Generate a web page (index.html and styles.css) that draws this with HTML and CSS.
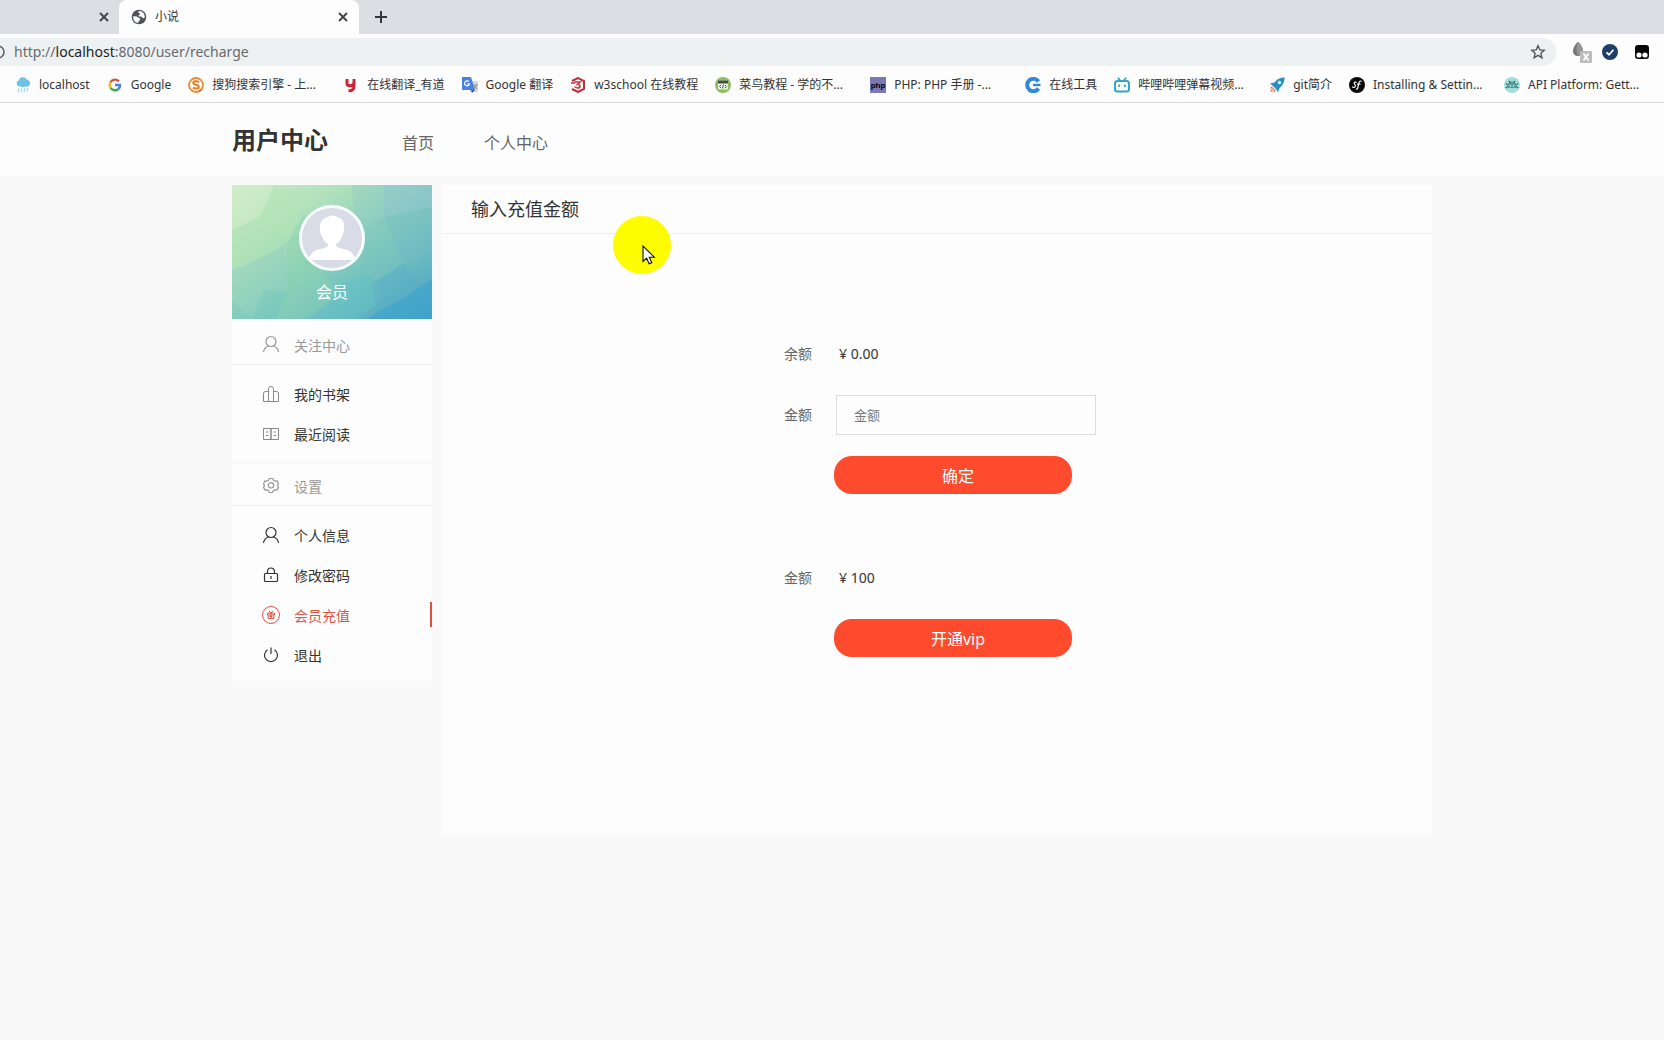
FILE: index.html
```html
<!DOCTYPE html>
<html lang="zh-CN">
<head>
<meta charset="utf-8">
<meta name="viewport" content="width=device-width, initial-scale=1">
<title>小说</title>
<link rel="stylesheet" href="styles.css">
</head>
<body>
<div class="browser">
  <div class="tabs">
    <div class="tab tab-rest">
      <button class="tab-close" aria-label="关闭"><svg width="10" height="10" viewBox="0 0 10 10"><path d="M1 1l8 8M9 1l-8 8" stroke="#3f4347" stroke-width="1.8"/></svg></button>
    </div>
    <div class="tab tab-active">
      <svg width="16" height="16" viewBox="0 0 16 16"><circle cx="8" cy="8" r="7.3" fill="#505357"/><path d="M2.200 7.200c2-.2 4.200.2 5.200 1.200.8.800 2 .8 1.800 2-.2 1.200-1.800 1-2 3.400C4 13.600 1.800 11 2.200 7.200zM8 2c-1 1-.6 2.200.6 2.400 1 .2.2 1.400-.8 1.800-.8.4-.2 1.400 1 1.400 1.600 0 2.600.6 3 1.600.8.200 1.400-.2 2-.8C14 4.800 11.200 1.800 8 2z" fill="#fdfdfd"/></svg>
      <span class="tab-name">小说</span>
      <button class="tab-close" aria-label="关闭"><svg width="10" height="10" viewBox="0 0 10 10"><path d="M1 1l8 8M9 1l-8 8" stroke="#3f4347" stroke-width="1.8"/></svg></button>
    </div>
    <button class="tab-new" aria-label="新标签页"><svg width="12" height="12" viewBox="0 0 12 12"><path d="M6 0v12M0 6h12" stroke="#33373b" stroke-width="2"/></svg></button>
  </div>
  <div class="toolbar">
    <div class="address">
      <svg class="site-info" width="5" height="14" viewBox="9 0 5 14"><circle cx="7" cy="7" r="6" fill="none" stroke="#606468" stroke-width="1.6"/></svg>
      <span class="url">http://<b>localhost</b>:8080/user/recharge</span>
      <svg width="16" height="16" viewBox="0 0 16 16"><path d="M8 1.800l1.800 4.100 4.400.4-3.300 3 1 4.400L8 11.400l-3.900 2.300 1-4.400-3.300-3 4.400-.4z" fill="none" stroke="#53575b" stroke-width="1.4"/></svg>
    </div>
    <div class="extensions">
      <svg width="20" height="22" viewBox="0 0 20 22"><path d="M6 1C3 3 1 7 1 10c0 3 2 5 5 5s5-2 5-5c0-3-2-7-5-9z" fill="#777"/><path d="M6 1C4 5 4 10 6 15c3 0 5-2 5-5 0-3-2-7-5-9z" fill="#959595"/><rect x="8" y="10" width="12" height="12" rx="1" fill="#bcbcbc"/><path d="M11.500 12.500l5 7M16.500 12.500l-5 7" stroke="#fff" stroke-width="1.8"/></svg>
      <svg width="16" height="16" viewBox="0 0 16 16"><circle cx="8" cy="8" r="8" fill="#1f3f69"/><path d="M4.500 8.300l2.500 2.400 4.500-4.900" fill="none" stroke="#fff" stroke-width="1.7"/></svg>
      <svg class="last" width="14" height="14" viewBox="0 0 14 14"><rect width="14" height="14" rx="3" fill="#050505"/><circle cx="4" cy="10" r="2.6" fill="#fff"/><circle cx="10" cy="10" r="2.6" fill="#fff"/></svg>
    </div>
  </div>
  <nav class="bookmarks" aria-label="书签">
    <a href="#"><svg viewBox="0 0 16 16"><path d="M4 9.500a3.200 3.200 0 0 1-.4-6A4.400 4.400 0 0 1 12 3a3.300 3.300 0 0 1 .5 6.500z" fill="#72bfe8"/><path d="M8 5v5" stroke="#72bfe8" stroke-width="3"/><path d="M4 11l-1 4M7 10.500l-1 5M10 11l-1 4M13 10.500l-1 4" stroke="#a5d7ef" stroke-width="1.2"/></svg><span>localhost</span></a>
    <a href="#"><svg viewBox="0 0 16 16"><g fill="none" stroke-width="2.4"><path d="M3.600 5.200A5 5 0 0 1 11.800 4.400" stroke="#e04a3f"/><path d="M3.600 5.200a5 5 0 0 0 0 5.500" stroke="#f2b705"/><path d="M3.600 10.700a5 5 0 0 0 7.800 1.300" stroke="#3fa757"/><path d="M8 8h5a5 5 0 0 1-1.600 4" stroke="#4a80e8"/></g></svg><span>Google</span></a>
    <a href="#"><svg viewBox="0 0 16 16"><circle cx="8" cy="8" r="7" fill="#fff" stroke="#ec8b36" stroke-width="1.8"/><path d="M11 5C9 3.800 5.200 4 5.200 6s5.600 1.600 5.600 3.700S7 12 4.800 10.700M11 14.500l3-2.500" fill="none" stroke="#e97b22" stroke-width="2.1"/></svg><span class="cut">搜狗搜索引擎 - 上...</span></a>
    <a href="#"><svg viewBox="0 0 16 16"><path d="M4 2v4.500c0 3 5.500 3 7 0V2M11 2v7c0 3.500-2 5-5.500 4.600" fill="none" stroke="#cf2436" stroke-width="3"/></svg><span>在线翻译_有道</span></a>
    <a href="#"><svg viewBox="0 0 16 16"><path d="M6 4h10v11H8z" fill="#d6d9dc"/><path d="M0 0h9l4 13H1a1 1 0 0 1-1-1z" fill="#4a82dc"/><path d="M9 13h4l-3 3z" fill="#3658b0"/><path d="M7 4.700A2.500 2.500 0 1 0 7.500 7H5.200" fill="none" stroke="#fff" stroke-width="1.2"/><path d="M11.500 8h4M12 12l3-4M12.500 9l2.500 3" stroke="#7c8790" stroke-width="1"/></svg><span>Google 翻译</span></a>
    <a href="#"><svg viewBox="0 0 16 16"><path d="M2 4l6-3 6 3v8l-6 3-6-3" fill="none" stroke="#bd303b" stroke-width="2"/><path d="M1 6h4M4.500 5H10L7.500 7.500c3-.2 3.500 3.500.5 3.500-1.500 0-3-.6-3-1.500" fill="none" stroke="#c8363f" stroke-width="1.7"/></svg><span>w3school 在线教程</span></a>
    <a href="#"><svg viewBox="0 0 16 16"><circle cx="8" cy="8" r="8" fill="#8fbd62"/><rect x="3" y="3.500" width="10" height="9" rx="1" fill="#e9f1e0"/><path d="M3 3.500h10v3H3z" fill="#3c5142"/><path d="M6 8L4.500 9.500 6 11M10 8l1.500 1.500L10 11M8.500 7.500l-1 4" fill="none" stroke="#53605a"/></svg><span class="cut">菜鸟教程 - 学的不...</span></a>
    <a href="#"><svg viewBox="0 0 16 16"><path d="M0 0h16v16H0z" fill="#7b78b3"/><text x="8" y="11" class="php-mark">php</text></svg><span class="cut">PHP: PHP 手册 -...</span></a>
    <a href="#"><svg viewBox="0 0 16 16"><path d="M13.500 4.500A6.200 6.200 0 1 0 13.500 11.500" fill="none" stroke="#3488d8" stroke-width="4"/><path d="M8 8h7.500" stroke="#3488d8" stroke-width="2.4"/></svg><span>在线工具</span></a>
    <a href="#"><svg viewBox="0 0 16 16"><rect x="1" y="4" width="14" height="10.500" rx="2.5" fill="none" stroke="#33a5c6" stroke-width="2"/><path d="M4 .8L6.500 4M12 .8L9.500 4M5.200 7.500v2.500M10.800 7.500v2.500" stroke="#33a5c6" stroke-width="1.8"/></svg><span class="cut">哔哩哔哩弹幕视频...</span></a>
    <a href="#"><svg viewBox="0 0 16 16"><path d="M15.500.5C10 .5 7.500 3 5.500 5.500L1 6.500l2.500 2 4 4 1.500 3L10.500 11C13 9 15.500 6 15.500.5z" fill="#258fc8"/><circle cx="10.500" cy="5.500" r="1.7" fill="#e4f4fa"/><path d="M3.500 9.500l-2 2M5 11l-3.500 3.500M6.500 12.500l-2 2.500" stroke="#e28458" stroke-width="1.5"/></svg><span>git简介</span></a>
    <a href="#"><svg viewBox="0 0 16 16"><circle cx="8" cy="8" r="8" fill="#090909"/><path d="M7.500 5.700C6.500 4.500 4.500 5.500 5.500 7s1.500 2.500 0 3.300c-1 .5-2 0-2-.8M12.500 4.500c-1.500-1.500-2.500.5-3 3S8.700 12.800 7 11.900M8 7.200h3.500" fill="none" stroke="#fff" stroke-width="1.2"/></svg><span class="cut">Installing &amp; Settin...</span></a>
    <a href="#"><svg viewBox="0 0 16 16"><circle cx="8" cy="8" r="8" fill="#a2dfda"/><path d="M4 11V8.500a4 4 0 0 1 8 0V11z" fill="#56a09c"/><path d="M5 4l1.500 2M11 4L9.500 6M2 6.500L4 8M14 6.500L12 8M1.500 11L4 9.500M14.500 11L12 9.500" stroke="#3f6f70" stroke-width="1.3"/><path d="M6 9h1M9 9h1" stroke="#dff" stroke-width="1.5"/></svg><span class="cut">API Platform: Gett...</span></a>
  </nav>
</div>

<header class="site-header">
  <div class="wrap header-row">
    <h1>用户中心</h1>
    <nav class="site-nav" aria-label="主导航"><a href="#">首页</a><a href="#">个人中心</a></nav>
  </div>
</header>

<div class="wrap columns">
  <aside class="sidebar">
    <div class="profile">
      <svg class="profile-art" viewBox="0 0 200 134" preserveAspectRatio="none" aria-hidden="true">
        <defs><linearGradient id="sea" x1="0" y1="0" x2="1" y2="1"><stop offset="0" stop-color="#cdebc8"/><stop offset=".28" stop-color="#b0e1bb"/><stop offset=".58" stop-color="#80cabd"/><stop offset="1" stop-color="#479fc6"/></linearGradient></defs>
        <path d="M0 0h200v134H0z" fill="url(#sea)"/>
        <g opacity=".6">
        <path d="M0 0h42L28 32 0 46z" fill="#d5f0cb" opacity=".7"/>
        <path d="M42 0l33 10-19 50-28-28z" fill="#b4e5b2" opacity=".7"/>
        <path d="M0 46l28-14 26 28-42 21-12 3z" fill="#b4e4b4" opacity=".7"/>
        <path d="M54 60l18-32 12 52-28 28z" fill="#8bd3a9" opacity=".6"/>
        <path d="M0 84l12-3 40-21 4 42-24 2-12 30H0z" fill="#94d2bf" opacity=".65"/>
        <path d="M56 102l28-22 24 30-34 24H44z" fill="#8dd1b2" opacity=".7"/>
        <path d="M120 0h40l-8 28-12 32-18-28z" fill="#8dc9cb" opacity=".5"/>
        <path d="M152 0h48v22l-48 10z" fill="#8fc0d3" opacity=".8"/>
        <path d="M152 32l48-10v44l-28 14z" fill="#76bac7" opacity=".7"/>
        <path d="M126 48l26-16 20 48-32 18z" fill="#7ec5c0" opacity=".6"/>
        <path d="M108 98l32-8 12 24-28 20H88z" fill="#65c6c6" opacity=".7"/>
        <path d="M140 98l32-20 28 34-54 22z" fill="#5baec7" opacity=".65"/>
        <path d="M134 134l42-24 24-16v40z" fill="#3ca4cf"/>
        <path d="M0 116l20 18H0zM32 104l24 4-14 26H20z" fill="#72c6bd" opacity=".5"/>
        </g>
      </svg>
      <svg class="avatar" width="66" height="66" viewBox="0 0 66 66" role="img" aria-label="头像"><circle cx="33" cy="33" r="31.500" fill="#d9dce6" stroke="#f6fffc" stroke-width="3"/><path d="M21 22c0-7 4-9 8-10 3-2 7-2 9 0 5 1 7.500 4 7 10 0 3 0 6-1.500 8-1 4-3.500 7-6.500 9v2c3 3 10 2 15 6l4 5v3H10v-3l4-5c5-4 12-3 15-6v-2c-3-2-5.500-5-6.500-9-1.500-2-1.500-5-1.500-8z" fill="#fff"/></svg>
      <span>会员</span>
    </div>
    <section class="menu">
      <h2><svg viewBox="0 0 18 18"><circle cx="9" cy="6.500" r="5"/><path d="M1.500 17c.5-3.500 2.500-5.300 5-6M16.500 17c-.5-3.500-2.500-5.300-5-6"/></svg>关注中心</h2>
      <ul>
        <li><a href="#"><svg class="soft" viewBox="0 0 18 18"><path d="M6.500 16.500V3.500q0-2 2.500-2t2.500 2v13zM6.500 6.500h-3q-2 0-2 2v8h5M11.500 6.500h3q2 0 2 2v8h-5"/></svg>我的书架</a></li>
        <li><a href="#"><svg class="soft" viewBox="0 0 18 18"><path d="M9 3.500H1.500v11H9zM9 3.500h7.500v11H9zM4 7h2.500M4 10.500h2.500M11.500 7H14M11.500 10.500H14"/></svg>最近阅读</a></li>
      </ul>
    </section>
    <section class="menu">
      <h2><svg viewBox="0 0 18 18"><path d="M7.200 2.500h3.600l.7 1.800 1.600.9 2-.3 1.400 3-1 1.500 1 2-1.600 2.700-2-.2-1.500.8-.8 1.800H7.400l-.8-1.800-1.500-.8-2 .2-1.600-2.700 1-2-1-1.500 1.400-3 2 .3 1.600-.9z"/><circle cx="9" cy="9.300" r="2.7"/></svg>设置</h2>
      <ul>
        <li><a href="#"><svg viewBox="0 0 18 18"><circle cx="9" cy="6.500" r="5"/><path d="M1.500 17c.5-3.500 2.500-5.300 5-6M16.500 17c-.5-3.500-2.500-5.300-5-6"/></svg>个人信息</a></li>
        <li><a href="#"><svg viewBox="0 0 18 18"><rect x="2.500" y="7.500" width="13" height="8" rx="1"/><path d="M5.500 7.500V5.500a3.500 3.500 0 0 1 7 0v2M9 10v3"/></svg>修改密码</a></li>
        <li><a class="current" href="#" aria-current="page"><svg viewBox="0 0 18 18"><circle cx="9" cy="9" r="8.500"/><path d="M5.500 7.200h7v1.800h-7zM6.200 9v3.500h5.600V9M9 7v5.500M9 7L7 5M9 7l2-2M7.600 10.500h2.800"/></svg>会员充值</a></li>
        <li><a href="#"><svg viewBox="0 0 18 18"><path d="M5.500 3.700a6.500 6.500 0 1 0 7 0M9 1.500v6.500"/></svg>退出</a></li>
      </ul>
    </section>
  </aside>

  <main class="panel">
    <h2 class="panel-title">输入充值金额</h2>
    <div class="forms">
      <form class="recharge">
        <div class="field"><span class="label">余额</span><output>¥ 0.00</output></div>
        <div class="field"><label class="label" for="amount">金额</label><input id="amount" type="text" placeholder="金额"></div>
        <button class="submit" type="button">确定</button>
      </form>
      <form class="recharge">
        <div class="field"><span class="label">金额</span><output>¥ 100</output></div>
        <button class="submit" type="button">开通vip</button>
      </form>
    </div>
    <div class="pointer" aria-hidden="true"><svg width="14" height="20" viewBox="0 0 14 20"><path d="M1 1v15.500l3.600-3.300 2.500 5.600 2.700-1.200-2.500-5.400h5z" fill="#fff" stroke="#111" stroke-width="1.1"/></svg></div>
  </main>
</div>
</body>
</html>
```
FILE: styles.css
```css
* { box-sizing: border-box; }

body {
  margin: 0;
  min-width: 1200px;
  background: #f9f9f9;
  color: #333;
  font: 14px/20px "Noto Sans", "Noto Sans CJK SC", sans-serif;
}

a { color: inherit; text-decoration: none; }
h1, h2, ul { margin: 0; padding: 0; font-weight: 400; }
ul { list-style: none; }
button { padding: 0; border: 0; background: none; font: inherit; }
svg { display: block; flex: none; }

/* Browser bar */
.browser {
  overflow: hidden;
  background: #fdfdfd;
  border-bottom: 1px solid #d8dadc;
}
.tabs { display: flex; height: 34px; background: #dbdfe3; }
.tab { display: flex; align-items: center; padding: 0 11px 0 12px; }
.tab-rest { width: 119px; padding-right: 10px; }
.tab-active {
  width: 240px;
  border-radius: 8px 8px 0 0;
  background: #fdfdfd;
}
.tab-name { margin-left: 8px; font-size: 12px; }
.tab-close { margin-left: auto; }
.tab-new { margin-left: 16px; }
.toolbar { display: flex; align-items: center; height: 36px; }
.address {
  display: flex;
  flex: 1;
  align-items: center;
  height: 28px;
  padding-right: 10px;
  border-radius: 0 14px 14px 0;
  background: #eef1f2;
}
.url { flex: 1; margin-left: 9px; color: #676b6f; }
.url b { color: #222; font-weight: 400; }
.extensions { display: flex; align-items: center; gap: 10px; padding: 0 15px 0 16px; }
.extensions .last { margin-left: 7px; }
.bookmarks { display: flex; gap: 17px; height: 32px; padding: 0 15px 2px; align-items: center; }
.bookmarks a { display: flex; align-items: center; gap: 8px; font-size: 12px; white-space: nowrap; }
.bookmarks svg { width: 16px; height: 16px; }
.cut { width: 114px; }
.php-mark { font: bold 8px "Liberation Sans", sans-serif; text-anchor: middle; }

/* Site header */
.wrap { width: 1200px; margin: 0 auto; }
.site-header { background: #fdfdfd; }
.header-row { display: flex; align-items: center; height: 73px; }
h1 { font-size: 24px; font-weight: 700; line-height: 32px; }
.site-nav { display: flex; gap: 50px; margin-left: 74px; padding-top: 6px; color: #666; font-size: 16px; }

/* Sidebar */
.columns { display: flex; align-items: flex-start; gap: 10px; padding-top: 9px; }
.sidebar { width: 200px; }
.profile {
  position: relative;
  display: grid;
  justify-items: center;
  align-content: start;
  gap: 11px;
  height: 134px;
  padding-top: 20px;
  color: #fff;
  font-size: 16px;
}
.profile-art { position: absolute; inset: 0; width: 100%; height: 100%; }
.avatar, .profile span { position: relative; }
.menu { padding-bottom: 5px; background: #fdfdfd; }
.menu + .menu { margin-top: 4px; }
.menu h2, .menu a { display: flex; align-items: center; gap: 14px; padding-left: 30px; font-size: 14px; }
.menu h2 { height: 46px; padding-top: 8px; border-bottom: 1px solid #eee; color: #999; }
.menu + .menu h2 { height: 42px; padding-top: 4px; }
.menu ul { padding-top: 10px; }
.menu a { height: 40px; }
.menu svg { width: 18px; height: 18px; margin-bottom: 3px; fill: none; stroke: currentColor; stroke-width: 1.2; }
.menu .soft { stroke: #888; stroke-width: 1; }
.menu .current {
  background: linear-gradient(#d9503f, #d9503f) right 6px / 2px 25px no-repeat;
  color: #dc5448;
}
.menu .current svg { stroke-width: 1; }

/* Recharge panel */
.panel { position: relative; flex: 1; padding-bottom: 178px; background: #fdfdfd; }
.panel-title {
  height: 49px;
  padding-left: 29px;
  border-bottom: 1px solid #eee;
  font-size: 18px;
  line-height: 48px;
}
.forms { display: grid; gap: 64px; padding: 100px 0 0 342px; }
.recharge { display: grid; justify-items: start; }
.field { display: flex; align-items: center; height: 40px; }
.field + .field { margin-top: 21px; }
.label { width: 52px; color: #666; }
output { padding-left: 3px; }
input {
  width: 260px;
  height: 40px;
  padding: 0 17px;
  border: 1px solid #ddd;
  background: #fdfdfd;
  color: #333;
  font: inherit;
  font-size: 13px;
}
input::placeholder { color: #777; }
.submit {
  width: 238px;
  height: 38px;
  margin: 21px 0 0 50px;
  padding: 2px 0 0 10px;
  border-radius: 18px;
  background: #fe4b2d;
  color: #fff;
  font-size: 16px;
}

/* Highlighted mouse pointer, floating over the panel */
.pointer {
  position: absolute;
  top: 31px;
  left: 171px;
  width: 58px;
  height: 58px;
  padding: 29px 0 0 29px;
  border-radius: 50%;
  background: #fdfd00;
}
```
